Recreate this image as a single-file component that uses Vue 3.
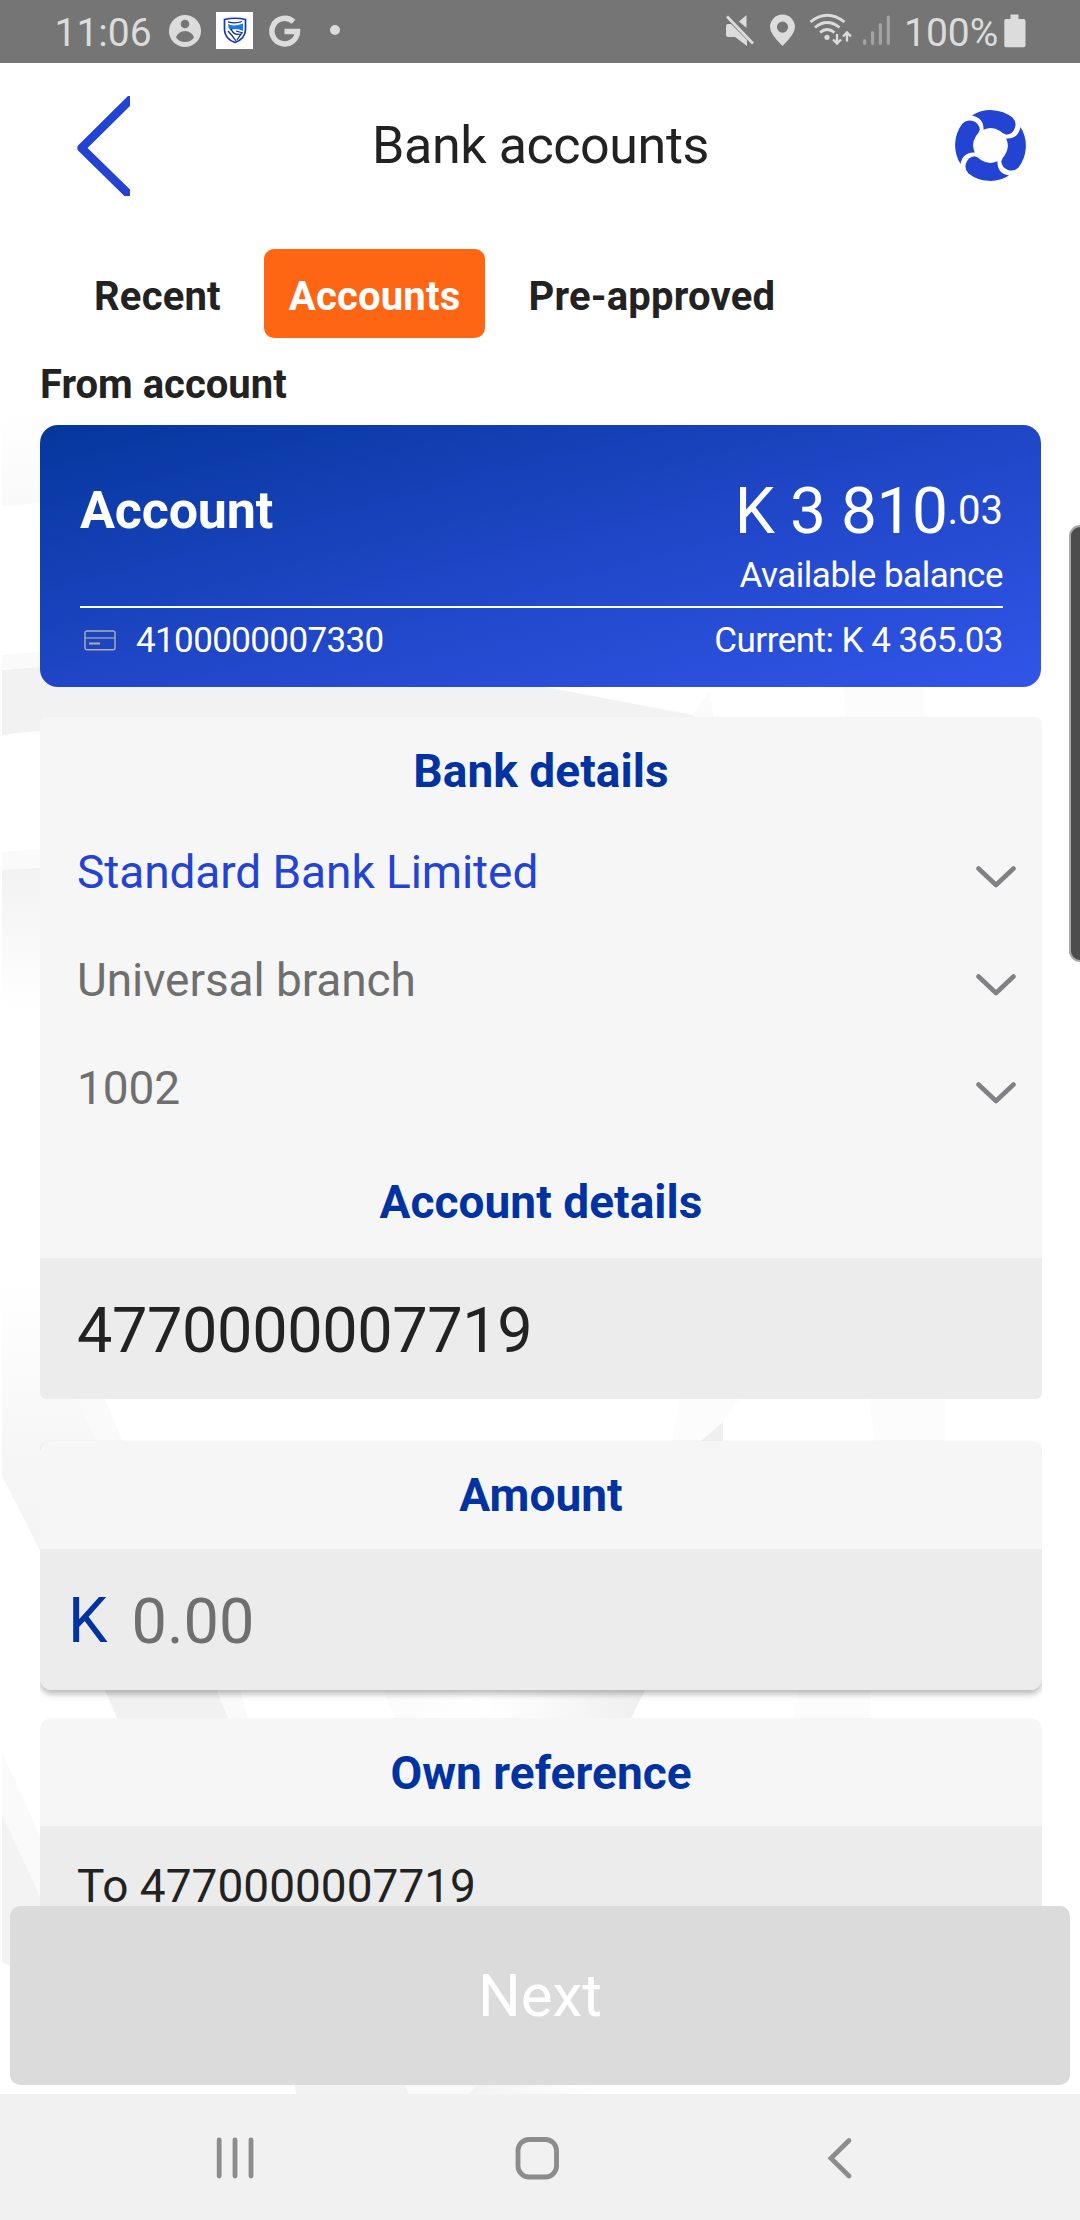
<script setup>
import { ref } from 'vue'

const tabs = ref([
  { label: 'Recent', active: false },
  { label: 'Accounts', active: true },
  { label: 'Pre-approved', active: false },
])

const bankFields = ref([
  { value: 'Standard Bank Limited', selected: true },
  { value: 'Universal branch', selected: false },
  { value: '1002', selected: false },
])
</script>

<template>
  <div class="screen">
    <svg class="watermark" width="1080" height="2220" viewBox="0 0 1080 2220" aria-hidden="true">
      <defs>
        <linearGradient id="fadeDown" x1="0" y1="0" x2="0" y2="1">
          <stop offset="0" stop-color="#f2f2f2" />
          <stop offset="1" stop-color="#ffffff" />
        </linearGradient>
        <linearGradient id="fadeUp" x1="0" y1="0" x2="0" y2="1">
          <stop offset="0" stop-color="#ffffff" />
          <stop offset="1" stop-color="#f9f9f9" />
        </linearGradient>
        <linearGradient id="fadeUpStrong" x1="0" y1="0" x2="0" y2="1">
          <stop offset="0" stop-color="#ffffff" />
          <stop offset="0.6" stop-color="#f6f6f6" />
          <stop offset="1" stop-color="#f3f3f3" />
        </linearGradient>
        <linearGradient id="fadeRight" x1="0" y1="0" x2="1" y2="0">
          <stop offset="0" stop-color="#fbfbfb" />
          <stop offset="0.4" stop-color="#ffffff" />
          <stop offset="1" stop-color="#efefef" />
        </linearGradient>
        <linearGradient id="fadeLeft" x1="0" y1="0" x2="1" y2="0">
          <stop offset="0" stop-color="#f2f2f2" />
          <stop offset="1" stop-color="#ffffff" />
        </linearGradient>
      </defs>
      <path d="M2 412H360L60 502L2 506Z" fill="url(#fadeUp)" />
      <path d="M2 655L60 650V672L2 668Z" fill="#fafafa" />
      <path d="M2 670L60 666L300 640L545 687L693 715V760H60V730Q30 731 2 735Z" fill="#f2f2f2" />
      <path d="M693 714L710 690L714 720H693Z" fill="#fbfbfb" />
      <path d="M843 680H925V720H846Z" fill="#fcfcfc" />
      <path d="M2 852L60 848V872L2 870Z" fill="#fafafa" />
      <path d="M2 870L60 867V1010H2Z" fill="url(#fadeDown)" />
      <path d="M77 1399H105L124 1445H97Z" fill="#fafafa" />
      <path d="M2 1280H45L77 1399L97 1442L60 1590L2 1476Z" fill="url(#fadeUpStrong)" />
      <path d="M723 1422V1442H698Z" fill="#efefef" />
      <path d="M680 1399H740L722 1423L700 1442H672Z" fill="#fcfcfc" />
      <path d="M869 1399H945V1441H875Z" fill="#fcfcfc" />
      <path d="M104 1688H216L229 1720H118Z" fill="#f1f1f1" />
      <path d="M216 1688H240L248 1720H229Z" fill="#fafafa" />
      <path d="M382 1688H646L630 1720H396Z" fill="url(#fadeRight)" />
      <path d="M800 1688H870V1720H792Z" fill="#fcfcfc" />
      <path d="M2 1752L60 1880V1960L2 1880Z" fill="#fafafa" />
      <path d="M2 1815L60 1940V1990L2 1962Z" fill="#f3f3f3" />
      <path d="M294 2084H404L410 2096H297Z" fill="#f2f2f2" />
      <path d="M404 2084H478L468 2096H410Z" fill="#fafafa" />
      <path d="M478 2084H600V2096H466Z" fill="url(#fadeLeft)" />
    </svg>

    <div class="status">
      <span class="clock">11:06</span>
      <svg class="status-left" width="180" height="63" viewBox="165 0 180 63">
        <circle cx="185" cy="31" r="16" fill="#dcdcdc" />
        <circle cx="185" cy="24" r="4.3" fill="#757575" />
        <path d="M176 37.5Q178.500 31 185 31T194 37.500Q190.500 42 185 42T176 37.500Z" fill="#757575" />
        <rect x="216" y="12" width="37" height="37" fill="#fff" />
        <path d="M224.500 19.500Q234.500 17 245.500 19.500V30Q245 39 235 42.500Q225 39 224.500 30Z" fill="#fff" stroke="#1537b8" stroke-width="1.7" />
        <path d="M228 24Q233 27 243 23.500V31Q236 27.500 230.500 30.500Q228 28 228 24Z" fill="#167be8" />
        <path d="M228 21.800Q235 24 242 21.500M228 31Q232 35 236 41M231 29Q234 36 241 34L237 40M236 31L243 33" fill="none" stroke="#102e86" stroke-width="1.300" />
        <path d="M293.500 21.800A12.800 12.800 0 1 0 297.500 31.500H284.500" fill="none" stroke="#dcdcdc" stroke-width="5.500" />
        <circle cx="335" cy="30" r="5" fill="#dcdcdc" />
      </svg>
      <svg class="status-right" width="180" height="63" viewBox="720 0 180 63">
        <g fill="#dcdcdc">
          <path d="M746.500 15V28L739 21.500Z" />
          <path d="M726 26Q726 24 728 24H731L747 40V46L735 37H728Q726 37 726 35Z" />
          <path d="M782.500 14.600A12.400 12.400 0 0 1 795 27Q795 34 782.500 46Q770 34 770 27A12.400 12.400 0 0 1 782.500 14.600ZM782.500 21.500A5.600 5.600 0 1 0 782.500 32.700A5.600 5.600 0 1 0 782.500 21.500Z" fill-rule="evenodd" />
          <circle cx="827" cy="37.300" r="2.600" />
        </g>
        <path d="M727 16.500L753 43.500" stroke="#dcdcdc" stroke-width="2.800" />
        <g fill="none" stroke="#dcdcdc" stroke-width="2.800">
          <path d="M810.500 22Q827 8.500 844.500 22" />
          <path d="M815 27.500Q827 17.500 839.500 27.500" />
          <path d="M820 32.500Q827 26.500 834.500 32.500" />
          <path d="M837 34V43M833 39.500L837 43.500L841 39.500M847 41.500V33M843 36.500L847 32.500L851 36.500" stroke-width="2.300" />
        </g>
        <g stroke="#a3a3a3" stroke-width="3.200" stroke-linecap="round">
          <path d="M864.700 40.500V43.500M872.600 32.500V43.500M880.400 24.500V43.500M888.300 17V43.500" />
        </g>
      </svg>
      <span class="percent">100%</span>
      <svg class="battery" width="22" height="34" viewBox="0 0 22 34">
        <path d="M6.500 0.500H14.500V5H19.500Q21.500 5 21.500 7V31.500Q21.500 33.300 19.500 33.300H2Q0.300 33.300 0.300 31.500V7Q0.300 5 2 5H6.500Z" fill="#dcdcdc" />
      </svg>
    </div>

    <header class="header">
      <svg class="back" width="54" height="100" viewBox="0 0 54 100">
        <path d="M56.500 1.500L5.500 52L56.500 102" fill="none" stroke="#2344d2" stroke-width="8.500" stroke-linejoin="round" />
      </svg>
      <h1>Bank accounts</h1>
      <svg class="help" width="71" height="71" viewBox="0 0 71 71">
        <path
          v-for="angle in [0, 90, 180, 270]"
          :key="angle"
          :transform="`rotate(${angle} 35.5 35.5)`"
          d="M17 5.500A35.500 35.500 0 0 1 57.500 7.500A10.200 10.200 0 0 1 51.500 24.800Q48 24 45 21A17.300 17.300 0 0 0 28.500 19.800C29 12 25 7 17 5.500Z"
          fill="#2344d2"
        />
      </svg>
    </header>

    <nav class="tabs">
      <span v-for="tab in tabs" :key="tab.label" class="tab" :class="{ active: tab.active }">{{ tab.label }}</span>
    </nav>

    <main class="content">
      <div class="from">From account</div>

      <section class="card">
        <div class="card-top">
          <div class="card-name">Account</div>
          <div class="card-funds">
            <div class="balance">K 3 810<span class="cents">.03</span></div>
            <div class="available">Available balance</div>
          </div>
        </div>
        <div class="card-bottom">
          <svg class="card-icon" width="32" height="21" viewBox="0 0 32 21">
            <rect x="1" y="1" width="30" height="18.800" rx="2" fill="none" stroke="#aeaeb0" stroke-width="1.400" />
            <path d="M1 8H31" stroke="#aeaeb0" stroke-width="1.200" />
            <path d="M5 13.500H16" stroke="#aeaeb0" stroke-width="2" />
          </svg>
          <span class="card-number">4100000007330</span>
          <span class="current">Current: K 4 365.03</span>
        </div>
      </section>

      <section class="panel bank">
        <h2 class="bank-title">Bank details</h2>
        <div v-for="field in bankFields" :key="field.value" class="select" :class="{ selected: field.selected }">
          <span>{{ field.value }}</span>
          <svg width="40" height="22" viewBox="0 0 40 22">
            <path d="M2.500 2.500L20 19L37.500 2.500" fill="none" stroke="#808184" stroke-width="4.600" stroke-linecap="round" stroke-linejoin="round" />
          </svg>
        </div>
        <h2 class="account-title">Account details</h2>
        <div class="input account-input">4770000007719</div>
      </section>

      <section class="panel amount">
        <h2>Amount</h2>
        <div class="input amount-input">
          <span class="currency">K</span>
          <span class="placeholder">0.00</span>
        </div>
      </section>

      <section class="panel reference">
        <h2>Own reference</h2>
        <div class="input reference-input">To 4770000007719</div>
      </section>
    </main>

    <div class="next">Next</div>

    <footer class="navbar">
      <svg width="1080" height="126" viewBox="0 0 1080 126" fill="none" stroke="#8c8c8c">
        <path d="M219.200 46V82M235 46V82M251 46V82" stroke-width="4.800" stroke-linecap="round" />
        <rect x="518" y="45.500" width="38.500" height="37.500" rx="11" stroke-width="4.800" />
        <path d="M849 46.500L831 64.300L849 82" stroke-width="4.800" stroke-linecap="round" />
      </svg>
    </footer>

    <div class="edge-handle"></div>
  </div>
</template>

<style>
body {
  margin: 0;
  background: #fff;
}
</style>

<style scoped>
.screen,
.screen * {
  box-sizing: border-box;
}

.screen {
  position: relative;
  isolation: isolate;
  display: flex;
  flex-direction: column;
  width: 1080px;
  height: 2220px;
  overflow: hidden;
  background: #fff;
  color: #222;
  font-family: Roboto, "Noto Sans", sans-serif;
  font-weight: 400;
  white-space: nowrap;
}

.watermark {
  position: absolute;
  top: 0;
  left: 0;
  z-index: -1;
}

.status {
  display: flex;
  flex: none;
  align-items: center;
  height: 63px;
  padding-left: 54.500px;
  background: #757575;
  color: #dcdcdc;
  font-size: 39px;
}

.clock {
  width: 110.500px;
  padding-top: 2px;
}

.status-right {
  margin-left: 375px;
}

.percent {
  width: 104px;
  padding: 2px 0 0 4px;
}

.battery {
  margin-top: -2px;
}

.header {
  display: flex;
  flex: none;
  align-items: center;
  justify-content: space-between;
  height: 165px;
  padding: 0 54px 0 76px;
}

h1,
h2 {
  margin: 0;
}

.header h1 {
  padding-right: 4px;
  font-size: 52px;
  font-weight: 400;
  letter-spacing: -0.420px;
}

.tabs {
  display: flex;
  flex: none;
  height: 89px;
  margin-top: 21px;
  padding-left: 69px;
}

.tab {
  padding: 6px 25px 0;
  font-size: 40px;
  font-weight: 700;
  letter-spacing: 0.200px;
  line-height: 84px;
}

.tab.active {
  margin: 0 18px;
  border-radius: 10px;
  background: #ff6614;
  color: #fff;
}

.content {
  flex: none;
  height: 1568px;
  padding: 0 38px 0 40px;
  overflow: hidden;
}

.from {
  height: 87px;
  padding-top: 6px;
  font-size: 40px;
  font-weight: 700;
  line-height: 81px;
}

.card {
  width: 1001px;
  height: 262px;
  padding: 50px 38px 0 40px;
  border-radius: 18px;
  background: linear-gradient(to bottom right, #04379d, #1f46c6 50%, #3155e8);
  color: #fff;
}

.card-top {
  display: flex;
  justify-content: space-between;
  height: 133px;
  border-bottom: 2px solid #fff;
}

.card-name {
  font-size: 52px;
  font-weight: 700;
  letter-spacing: -0.150px;
  line-height: 72px;
}

.card-funds {
  text-align: right;
}

.balance {
  font-size: 64px;
  letter-spacing: -0.450px;
  line-height: 74px;
}

.cents {
  font-size: 40px;
  letter-spacing: 0;
  line-height: 0;
  vertical-align: 9px;
}

.available {
  font-size: 35px;
  letter-spacing: -0.480px;
  line-height: 54px;
}

.card-bottom {
  display: flex;
  align-items: center;
  height: 64px;
  font-size: 35px;
}

.card-icon {
  margin-left: 4px;
}

.card-number {
  margin-left: 20px;
  letter-spacing: -0.620px;
}

.current {
  margin-left: auto;
  letter-spacing: -0.520px;
}

.panel {
  border-radius: 8px;
  background: #f6f6f6;
  overflow: hidden;
}

.panel h2 {
  height: 108px;
  color: #0033a1;
  font-size: 46px;
  font-weight: 700;
  letter-spacing: 0.050px;
  line-height: 108px;
  text-align: center;
}

.bank {
  margin-top: 30px;
  border-radius: 6px;
}

.panel .bank-title {
  height: 100px;
  padding-top: 8px;
  line-height: 93px;
}

.panel .account-title {
  height: 117px;
  padding-top: 5px;
  line-height: 112px;
}

.panel.reference h2 {
  padding-top: 1px;
}

.select {
  display: flex;
  align-items: center;
  justify-content: space-between;
  height: 108px;
  padding: 0 26px 0 37px;
  color: #6f6f6f;
  font-size: 46px;
}

.select span {
  padding-top: 1px;
  letter-spacing: -0.080px;
}

.select svg {
  margin-top: 12px;
}

.select.selected {
  color: #2344d2;
}

.input {
  display: flex;
  height: 141px;
  background: #ececec;
}

.account-input {
  padding: 4px 0 0 37px;
  font-size: 63px;
  letter-spacing: -0.380px;
  line-height: 137px;
}

.amount {
  margin-top: 42px;
  border-radius: 12px;
  box-shadow: 0 4px 6px rgba(0, 0, 0, 0.28);
  clip-path: inset(-1px 0 -14px 0);
}

.amount-input {
  padding-left: 28px;
  font-size: 63px;
  line-height: 143px;
}

.currency {
  color: #0033a1;
}

.placeholder {
  margin: 1px 0 0 24px;
  color: #6f6f6f;
}

.reference {
  margin-top: 28px;
  border-radius: 12px;
}

.reference-input {
  padding: 30px 0 0 37px;
  font-size: 46px;
  line-height: 60px;
}

.next {
  flex: none;
  height: 179px;
  margin: 0 10px 9px;
  border-radius: 10px;
  background: #dbdbdb;
  color: #fff;
  font-size: 60px;
  line-height: 179px;
  text-align: center;
}

.navbar {
  flex: none;
  height: 126px;
  background: #f1f1f1;
}

.edge-handle {
  position: absolute;
  top: 525px;
  right: -12px;
  width: 23px;
  height: 437px;
  border: 2px solid #a9a9a9;
  border-radius: 11px;
  background: #4d4d4d;
}
</style>
